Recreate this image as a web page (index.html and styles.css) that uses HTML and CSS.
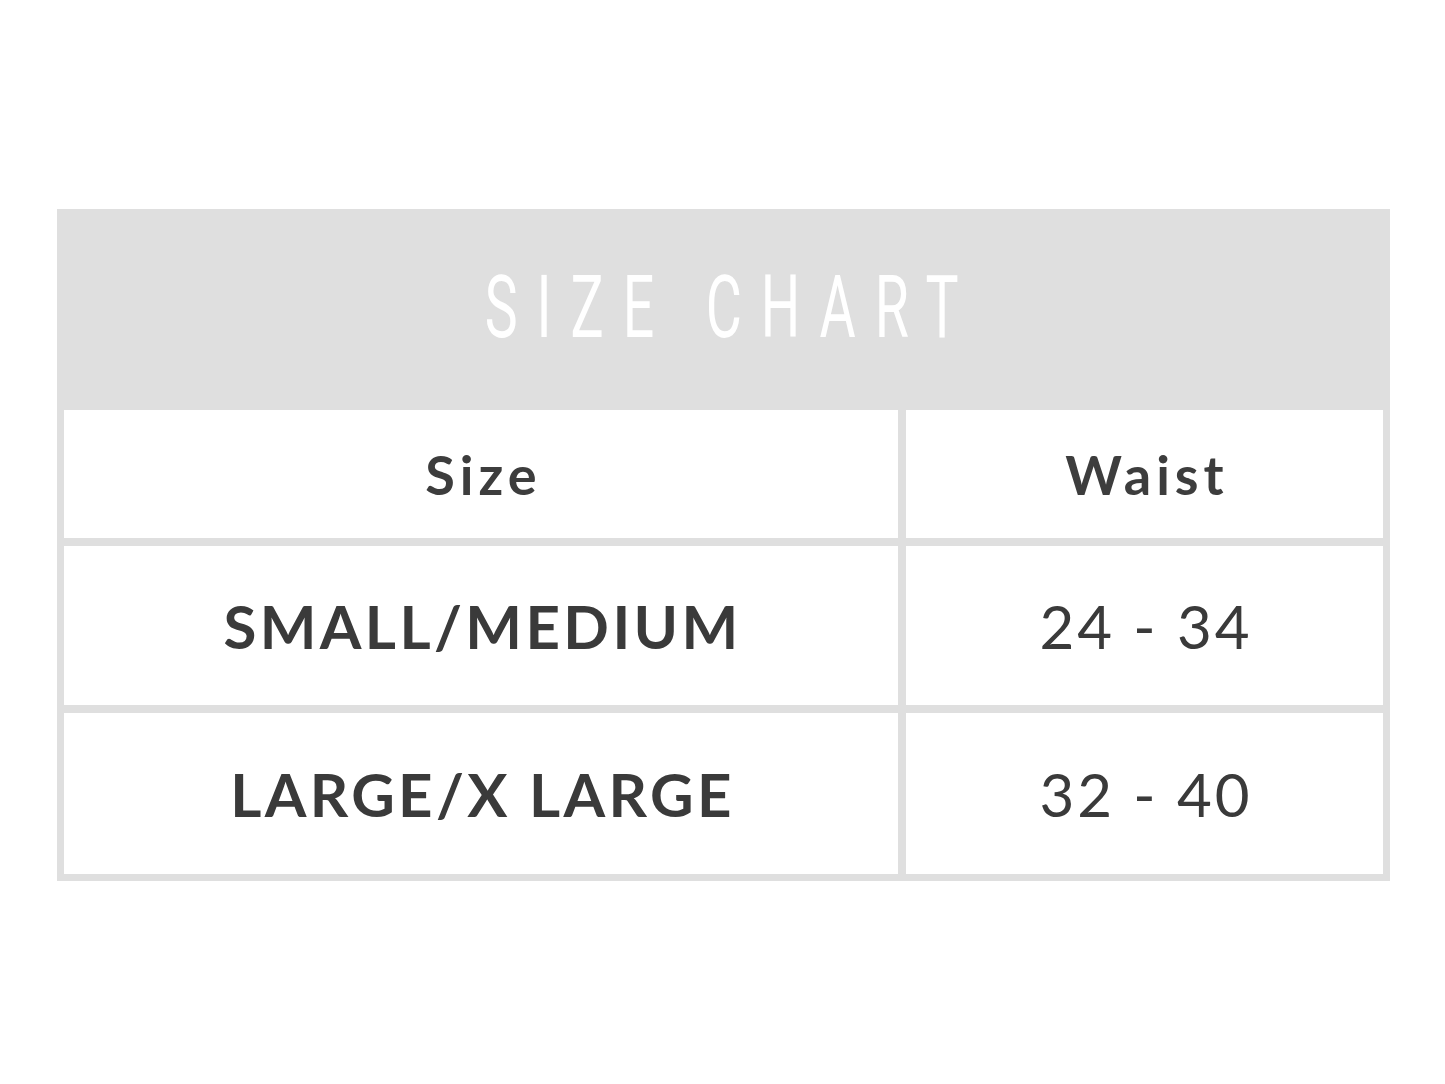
FILE: index.html
```html
<!DOCTYPE html>
<html>
<head>
<meta charset="utf-8">
<link rel="stylesheet" href="styles.css">
</head>
<body>
<div class="chart">
  <div class="title"><span class="title-text">SIZE CHART</span></div>
  <div class="grid">
    <div class="cell head">Size</div>
    <div class="cell head">Waist</div>
    <div class="cell size">SMALL/MEDIUM</div>
    <div class="cell val">24 - 34</div>
    <div class="cell size">LARGE/X LARGE</div>
    <div class="cell val">32 - 40</div>
  </div>
</div>
</body>
</html>
```

FILE: styles.css
```css
html, body { margin: 0; padding: 0; background: #fff; }
body { font-family: "Lato", "Open Sans", sans-serif; color: #3b3b3b; }
.chart {
  margin: 209px 0 0 57px;
  width: 1333px;
  background: #dfdfdf;
  padding: 0 7px 7px;
  box-sizing: border-box;
  display: flex;
  flex-direction: column;
}
.title {
  height: 201px;
  display: flex;
  align-items: center;
  justify-content: center;
}
.title-text {
  display: inline-block;
  font-family: "Roboto", sans-serif;
  font-weight: 400;
  font-size: 88px;
  color: #fff;
  letter-spacing: 30px;
  margin-right: -15px;
  transform: scaleX(0.63);
  white-space: nowrap;
  line-height: 1;
  padding-bottom: 6px;
}
.grid {
  display: grid;
  grid-template-columns: 834px 477px;
  grid-template-rows: 128px 159px 161px;
  column-gap: 8px;
  row-gap: 8px;
}
.cell {
  background: #fff;
  display: flex;
  align-items: center;
  justify-content: center;
}
.head { font-size: 54px; font-weight: 700; letter-spacing: 5px; color: #3d3d3d; padding-left: 5px; }
.size { font-size: 60px; font-weight: 700; letter-spacing: 3.4px; color: #3a3a3a; padding-left: 3px; }
.val { font-size: 60px; font-weight: 400; letter-spacing: 3px; color: #3a3a3a; padding-left: 3px; }
```
